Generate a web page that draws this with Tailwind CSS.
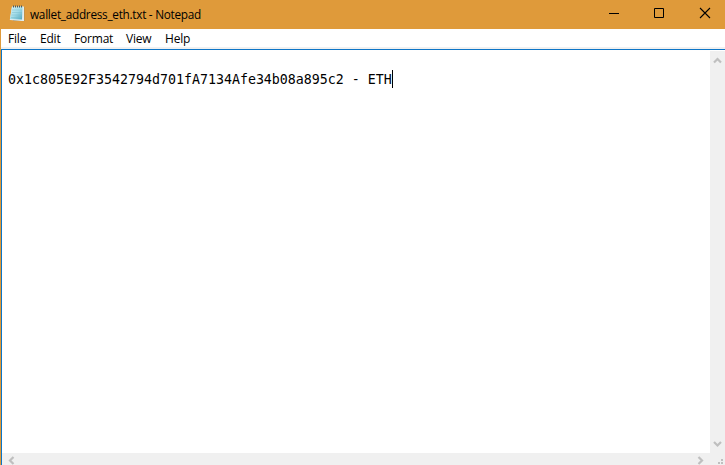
<!DOCTYPE html>
<html lang="en">
<head>
<meta charset="utf-8">
<title>wallet_address_eth.txt - Notepad</title>
<script src="https://cdn.jsdelivr.net/npm/@tailwindcss/browser@4"></script>
</head>
<body class="overflow-hidden bg-white">
<div class="flex h-[465px] w-[725px] flex-col border-l border-[#df9a3a] bg-white font-['Open_Sans','Noto_Sans',sans-serif] text-[12px] text-black">
  <header class="flex h-[29px] shrink-0 items-center bg-[#df9a3a]">
    <svg class="mb-px ml-2 h-[18px] w-4 shrink-0" viewBox="0 0 16 18">
      <defs><linearGradient id="page" x1="0" y1="0" x2="1" y2="1"><stop offset="0" stop-color="#d5f2f7"/><stop offset=".5" stop-color="#a2dce8"/><stop offset="1" stop-color="#4ba5bd"/></linearGradient></defs>
      <path d="M4 2h11.500v14H4z" fill="#a58a58"/>
      <path d="M3 1.500h12v14.500H13L0.8 15z" fill="#e1eef0"/>
      <path d="M3 2h10.500L13 14.500 1 14z" fill="url(#page)"/>
      <path d="M3 5h10M3 7.500h10M2.500 10h10M2 12.500h10" stroke="#78bdcd" stroke-width=".5"/>
      <path d="M4.500 0.500v2M6.500 0.500v2M8.500 0.500v2M10.500 0.500v2M12.500 0.500v2" stroke="#455b62" stroke-width="1"/>
    </svg>
    <h1 class="ml-[5px] mb-0.5 whitespace-nowrap text-[11.800px] leading-4 tracking-[-0.280px]">wallet_address_eth.txt - Notepad</h1>
    <div class="ml-auto flex h-full items-center">
      <svg class="h-[29px] w-[45px]" viewBox="0 0 45 29"><path d="M18 13.500h10" stroke="#000"/></svg>
      <svg class="h-[29px] w-[45px]" viewBox="0 0 45 29"><path d="M18.500 8.500h9v9h-9z" fill="none" stroke="#000"/></svg>
      <svg class="h-[29px] w-[44px]" viewBox="0 0 44 29"><path d="M19 8l10 10M29 8L19 18" fill="none" stroke="#000" stroke-width="1.100"/></svg>
    </div>
  </header>
  <nav class="flex h-5 shrink-0 border-b-2 border-[#f0f0f0] bg-white pl-[7px] leading-5 tracking-[-0.200px]">
    <span class="w-8">File</span><span class="w-[34px]">Edit</span><span class="w-[52px]">Format</span><span class="w-[39px]">View</span><span>Help</span>
  </nav>
  <main class="flex min-h-0 grow flex-col border-l border-t border-[#0d75c7] bg-white">
    <div class="flex min-h-0 grow pt-px">
      <pre class="grow whitespace-pre pl-[6px] pt-[19px] font-['DejaVu_Sans_Mono',monospace] text-[13.290px] leading-4"><span class="inline-block border-r border-black pt-0.5">0x1c805E92F3542794d701fA7134Afe34b08a895c2 - ETH</span></pre>
      <div class="flex w-[15px] shrink-0 flex-col justify-between bg-[#f0f0f0]">
        <svg class="h-[17px] w-[15px]" viewBox="0 0 15 17"><path d="M4 11.500l3.500-3.500 3.500 3.500" fill="none" stroke="#bfbfbf" stroke-width="2.200"/></svg>
        <svg class="h-[17px] w-[15px]" viewBox="0 0 15 17"><path d="M4 6l3.500 3.500L11 6" fill="none" stroke="#bfbfbf" stroke-width="2.200"/></svg>
      </div>
    </div>
    <div class="flex h-3 shrink-0 items-start bg-[#f0f0f0] pl-px">
      <svg class="h-3 w-[17px]" viewBox="0 0 17 12"><path d="M10.500 4L7 7.500l3.500 3.500" fill="none" stroke="#bfbfbf" stroke-width="2.200"/></svg>
      <svg class="ml-auto h-3 w-[32px]" viewBox="0 0 32 12"><path d="M5.500 4L9 7.500 5.500 11" fill="none" stroke="#bfbfbf" stroke-width="2.200"/><path d="M28 6h2v2h-2zM28 9h2v2h-2zM25 9h2v2h-2z" fill="#bfbfbf"/></svg>
    </div>
  </main>
</div>
</body>
</html>
